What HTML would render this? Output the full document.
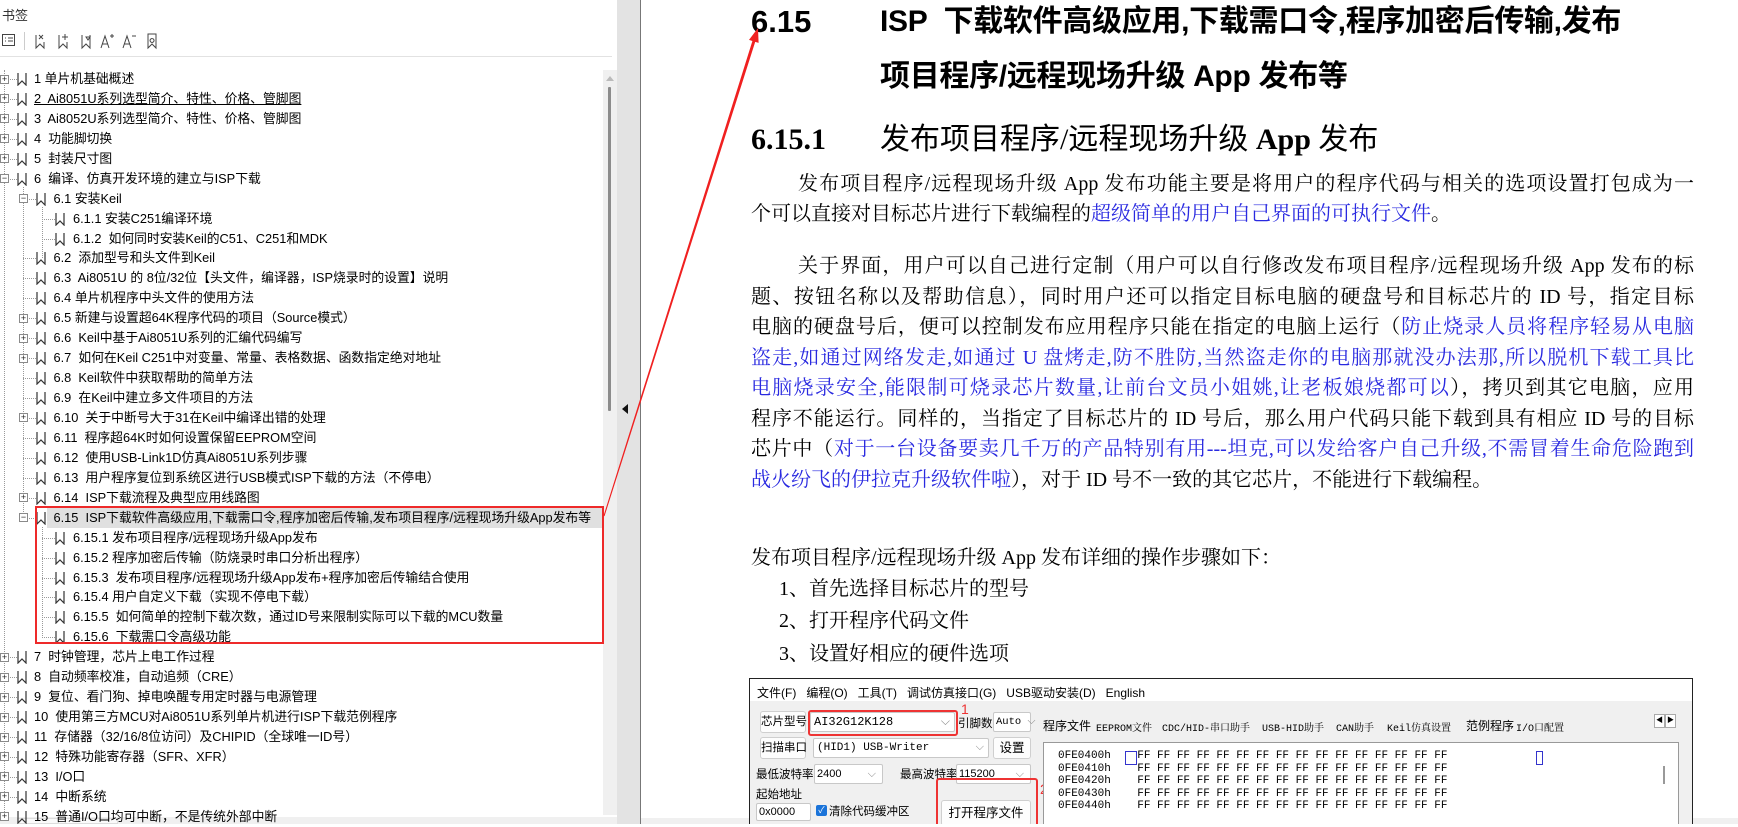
<!DOCTYPE html>
<html><head><meta charset="utf-8">
<style>
*{margin:0;padding:0;box-sizing:border-box}
body{width:1738px;height:824px;overflow:hidden;background:#fff;position:relative;font-family:"Liberation Sans","Noto Sans CJK SC",sans-serif;color:#000}
.a{position:absolute;white-space:nowrap}
.row{position:absolute;height:20px;line-height:20px;font-size:12.8px;white-space:nowrap}
.exp{position:absolute;width:9px;height:9px;border:1px solid #8a8a8a;background:#fff;font-size:9px;line-height:7px;text-align:center;color:#222}
.bm{position:absolute;width:10px;height:14px}
.hd{position:absolute;border-top:1px dotted #999;height:0}
.vd{position:absolute;border-left:1px dotted #999;width:0}
.p{position:absolute;left:751px;width:943px;font-family:"Liberation Serif","Noto Serif CJK SC",serif;font-size:20px;line-height:30px;white-space:nowrap;text-align:justify;text-align-last:justify}
.nl{text-align-last:left}
.b{color:#2a2ae0}
.ui{font-family:"Liberation Sans","Noto Sans CJK SC",sans-serif;font-size:12.5px}
.mono{font-family:"Liberation Mono","Noto Serif CJK SC",monospace;font-size:12px}
.btn{position:absolute;background:#fdfdfd;border:1px solid #cfcfcf;border-radius:3px;text-align:center}
.cb{position:absolute;background:#fff;border:1px solid #c8c8c8;border-radius:2px}
</style></head><body>

<div class="a" style="left:2px;top:5px;font-size:13px;color:#333">书签</div>
<svg class="a" style="left:0;top:30px" width="180" height="22" viewBox="0 0 180 22" fill="none" stroke="#444" stroke-width="1">
<rect x="2.5" y="4.5" width="12" height="11"/><path d="M5 8h1M8 8h5M5 11h1M8 11h5"/>
<path d="M24.5 2v18" stroke="#ccc"/>
<path d="M36 5v13l4-4 4 4v-6M39 5l4 4M43 5l-4 4"/>
<path d="M59 5v13l4-4 4 4v-6M65 4v6M62 7h6" />
<path d="M82 5v13l4-4 4 4V5M86 7l2 3 2-3z"/>
<path d="M101 18l4-12 4 12M102.5 14h5M110 6h4M112 4v4"/>
<path d="M123 18l4-12 4 12M124.5 14h5M132 6h4"/>
<path d="M148 4v14l4-4 4 4V4zM152 8.5a2 2 0 1 0 .1 0"/>
</svg>
<div class="a" style="left:0;top:56px;width:612px;height:1px;background:#e2e2e2"></div>

<div class="a" style="left:603px;top:70px;width:14px;height:745px;background:#f0f0f0"></div>
<div class="a" style="left:606px;top:76px;width:0;height:0;border-left:4px solid transparent;border-right:4px solid transparent;border-bottom:5px solid #bbb"></div>
<div class="a" style="left:608px;top:87px;width:3px;height:324px;background:#8c8c8c;border-radius:1px"></div>
<div class="a" style="left:617px;top:0;width:23px;height:824px;background:#e3e3e3"></div>
<div class="a" style="left:640px;top:0;width:1px;height:824px;background:#777"></div>
<div class="a" style="left:622px;top:404px;width:0;height:0;border-top:5px solid transparent;border-bottom:5px solid transparent;border-right:6px solid #111"></div>

<div class="vd" style="left:4px;top:70px;height:750px"></div>
<div class="vd" style="left:23px;top:187px;height:331px"></div>
<div class="vd" style="left:42px;top:207px;height:51px"></div>
<div class="vd" style="left:42px;top:527px;height:111px"></div>

<div class="a" style="left:47px;top:508px;width:556px;height:20px;background:#e0e0e0"></div>

<div id="tree"></div>

<div class="a" style="left:35px;top:506px;width:569px;height:138px;border:2px solid #ee2a2a;z-index:5"></div>

<div class="a" style="left:0;top:817px;width:617px;height:7px;background:#f0f0f0"></div>
<div class="a" style="left:17px;top:818px;width:101px;height:6px;background:#fafafa;border:1px solid #ddd"></div>
<div class="a" style="left:641px;top:818px;width:1097px;height:6px;background:#f0f0f0"></div>

<div class="a" style="left:751px;top:4px;font:bold 31px 'Liberation Sans','Noto Sans CJK SC',sans-serif;line-height:36px">6.15</div>
<div class="a" style="left:880px;top:4px;font:bold 30px 'Liberation Sans','Noto Sans CJK SC',sans-serif;line-height:36px;letter-spacing:-0.3px">ISP&nbsp; 下载软件高级应用,下载需口令,程序加密后传输,发布</div>
<div class="a" style="left:880px;top:59px;font:bold 30px 'Liberation Sans','Noto Sans CJK SC',sans-serif;line-height:36px;letter-spacing:-0.3px">项目程序/远程现场升级 App 发布等</div>
<div class="a" style="left:751px;top:122px;font:bold 30px 'Liberation Serif','Noto Serif CJK SC',serif;line-height:36px">6.15.1</div>
<div class="a" style="left:880px;top:122px;font:30px 'Liberation Serif','Noto Sans CJK SC',sans-serif;line-height:36px">发布项目程序/远程现场升级 <b>App</b> 发布</div>

<div class="p" style="top:169px;text-indent:47px">发布项目程序/远程现场升级 App 发布功能主要是将用户的程序代码与相关的选项设置打包成为一</div>
<div class="p nl" style="top:199px">个可以直接对目标芯片进行下载编程的<span class="b">超级简单的用户自己界面的可执行文件</span>。</div>
<div class="p" style="top:251px;text-indent:47px">关于界面，用户可以自己进行定制（用户可以自行修改发布项目程序/远程现场升级 App 发布的标</div>
<div class="p" style="top:281.5px">题、按钮名称以及帮助信息），同时用户还可以指定目标电脑的硬盘号和目标芯片的 ID 号，指定目标</div>
<div class="p" style="top:312px">电脑的硬盘号后，便可以控制发布应用程序只能在指定的电脑上运行（<span class="b">防止烧录人员将程序轻易从电脑</span></div>
<div class="p b" style="top:342.5px">盗走,如通过网络发走,如通过 U 盘烤走,防不胜防,当然盗走你的电脑那就没办法那,所以脱机下载工具比</div>
<div class="p" style="top:373px"><span class="b">电脑烧录安全,能限制可烧录芯片数量,让前台文员小姐姚,让老板娘烧都可以</span>），拷贝到其它电脑，应用</div>
<div class="p" style="top:403.5px">程序不能运行。同样的，当指定了目标芯片的 ID 号后，那么用户代码只能下载到具有相应 ID 号的目标</div>
<div class="p" style="top:434px">芯片中（<span class="b">对于一台设备要卖几千万的产品特别有用---坦克,可以发给客户自己升级,不需冒着生命危险跑到</span></div>
<div class="p nl" style="top:464.5px"><span class="b">战火纷飞的伊拉克升级软件啦</span>），对于 ID 号不一致的其它芯片，不能进行下载编程。</div>

<div class="p nl" style="top:543px">发布项目程序/远程现场升级 App 发布详细的操作步骤如下：</div>
<div class="p nl" style="top:574px;left:779px;width:400px">1、首先选择目标芯片的型号</div>
<div class="p nl" style="top:606px;left:779px;width:400px">2、打开程序代码文件</div>
<div class="p nl" style="top:639px;left:779px;width:400px">3、设置好相应的硬件选项</div>

<div class="a" style="left:749px;top:678px;width:944px;height:146px;border:1px solid #222;border-bottom:none;background:#f0f0f0;overflow:hidden">
  <div class="a" style="left:0;top:0;width:944px;height:22px;background:#fff"></div>
  <div class="a ui" style="left:7px;top:5px;font-size:12px">文件(F)&nbsp;&nbsp; 编程(O)&nbsp;&nbsp; 工具(T)&nbsp;&nbsp; 调试仿真接口(G)&nbsp;&nbsp; USB驱动安装(D)&nbsp;&nbsp; English</div>
  <div class="btn ui" style="left:10px;top:32px;width:46px;height:22px;line-height:20px;font-size:11.5px">芯片型号</div>
  <div class="cb mono" style="left:60px;top:33px;width:145px;height:20px;line-height:18px;padding-left:3px">AI32G12K128<span style="position:absolute;right:4px;color:#888">⌵</span></div>
  <div class="a" style="left:58px;top:31px;width:150px;height:26px;border:2px solid #e33;border-radius:3px"></div>
  <div class="a ui" style="left:211px;top:22px;color:#e33;font-size:14px">1</div>
  <div class="a ui" style="left:208px;top:36px;font-size:11.5px">引脚数</div>
  <div class="cb mono" style="left:243px;top:33px;width:38px;height:20px;line-height:18px;padding-left:2px;font-size:10.5px">Auto<span style="color:#888"> ⌵</span></div>
  <div class="btn ui" style="left:10px;top:58px;width:46px;height:22px;line-height:20px;font-size:11.5px">扫描串口</div>
  <div class="cb mono" style="left:63px;top:59px;width:176px;height:20px;line-height:18px;padding-left:3px;font-size:11px">(HID1) USB-Writer<span style="position:absolute;right:4px;color:#888">⌵</span></div>
  <div class="btn ui" style="left:243px;top:58px;width:38px;height:22px;line-height:20px">设置</div>
  <div class="a ui" style="left:6px;top:87px;font-size:11.5px">最低波特率</div>
  <div class="cb ui" style="left:64px;top:85px;width:69px;height:20px;line-height:18px;padding-left:2px;font-size:11px">2400<span style="position:absolute;right:6px;color:#888">⌵</span></div>
  <div class="a ui" style="left:150px;top:87px;font-size:11.5px">最高波特率</div>
  <div class="cb ui" style="left:206px;top:85px;width:75px;height:20px;line-height:18px;padding-left:2px;font-size:11px">115200<span style="position:absolute;right:6px;color:#888">⌵</span></div>
  <div class="a ui" style="left:6px;top:107px;font-size:11.5px">起始地址</div>
  <div class="cb ui" style="left:6px;top:124px;width:55px;height:18px;line-height:16px;font-size:11px;padding-left:2px">0x0000</div>
  <div class="a" style="left:66px;top:126px;width:11px;height:11px;background:#1a73d9;border-radius:2px;color:#fff;font-size:9px;line-height:11px;text-align:center">✓</div>
  <div class="a ui" style="left:79px;top:124px;font-size:11.5px">清除代码缓冲区</div>
  <div class="btn ui" style="left:191px;top:121px;width:90px;height:26px;line-height:24px">打开程序文件</div>
  <div class="a" style="left:186px;top:99px;width:102px;height:50px;border:2px solid #e33;border-radius:3px"></div>
  <div class="a ui" style="left:290px;top:102px;color:#e33;font-size:14px">2</div>
  <span class="a ui" style="left:293px;top:38px;font-size:12px">程序文件</span>
  <span class="a mono" style="left:346px;top:40px;font-size:10px">EEPROM文件</span>
  <span class="a mono" style="left:412px;top:40px;font-size:10px">CDC/HID-串口助手</span>
  <span class="a mono" style="left:512px;top:40px;font-size:10px">USB-HID助手</span>
  <span class="a mono" style="left:586px;top:40px;font-size:10px">CAN助手</span>
  <span class="a mono" style="left:637px;top:40px;font-size:10px">Keil仿真设置</span>
  <span class="a ui" style="left:716px;top:38px;font-size:12px">范例程序</span>
  <span class="a mono" style="left:766px;top:40px;font-size:10px">I/O口配置</span>
  <div class="a" style="left:904px;top:35px;width:11px;height:14px;border:1px solid #aaa;background:#fff;font-size:7px;line-height:12px;text-align:center">◀</div>
  <div class="a" style="left:915px;top:35px;width:11px;height:14px;border:1px solid #aaa;background:#fff;font-size:7px;line-height:12px;text-align:center">▶</div>
  <div class="a" style="left:293px;top:63px;width:636px;height:90px;background:#fff;border:1px solid #999"></div>
  <div class="a" style="left:913px;top:87px;width:2px;height:18px;background:#999"></div>
  <div class="a" style="left:375px;top:72px;width:12px;height:14px;border:1px solid #33c"></div>
  <div class="a" style="left:786px;top:72px;width:7px;height:14px;border:1px solid #33c"></div>
  <div class="a mono" style="left:308px;top:71px;font-size:11px;line-height:12.5px;white-space:pre">0FE0400h    FF FF FF FF FF FF FF FF FF FF FF FF FF FF FF FF
0FE0410h    FF FF FF FF FF FF FF FF FF FF FF FF FF FF FF FF
0FE0420h    FF FF FF FF FF FF FF FF FF FF FF FF FF FF FF FF
0FE0430h    FF FF FF FF FF FF FF FF FF FF FF FF FF FF FF FF
0FE0440h    FF FF FF FF FF FF FF FF FF FF FF FF FF FF FF FF</div>
</div>

<svg class="a" style="left:0;top:0;z-index:6" width="1738" height="824">
<polygon fill="#f02020" points="604.5,516.2 603.5,515.8 752.4,41 749,39.9 758,28 758.6,42.9 755.2,41.9"/>
</svg>

<script>
var items=[
[0,'+','1 单片机基础概述'],
[0,'+','2&nbsp; Ai8051U系列选型简介、特性、价格、管脚图',1],
[0,'+','3&nbsp; Ai8052U系列选型简介、特性、价格、管脚图'],
[0,'+','4&nbsp; 功能脚切换'],
[0,'+','5&nbsp; 封装尺寸图'],
[0,'-','6&nbsp; 编译、仿真开发环境的建立与ISP下载'],
[1,'-','6.1 安装Keil'],
[2,'','6.1.1 安装C251编译环境'],
[2,'','6.1.2&nbsp; 如何同时安装Keil的C51、C251和MDK'],
[1,'','6.2&nbsp; 添加型号和头文件到Keil'],
[1,'','6.3&nbsp; Ai8051U 的 8位/32位【头文件，编译器，ISP烧录时的设置】说明'],
[1,'','6.4 单片机程序中头文件的使用方法'],
[1,'+','6.5 新建与设置超64K程序代码的项目（Source模式）'],
[1,'+','6.6&nbsp; Keil中基于Ai8051U系列的汇编代码编写'],
[1,'+','6.7&nbsp; 如何在Keil C251中对变量、常量、表格数据、函数指定绝对地址'],
[1,'','6.8&nbsp; Keil软件中获取帮助的简单方法'],
[1,'','6.9&nbsp; 在Keil中建立多文件项目的方法'],
[1,'+','6.10&nbsp; 关于中断号大于31在Keil中编译出错的处理'],
[1,'','6.11&nbsp; 程序超64K时如何设置保留EEPROM空间'],
[1,'','6.12&nbsp; 使用USB-Link1D仿真Ai8051U系列步骤'],
[1,'','6.13&nbsp; 用户程序复位到系统区进行USB模式ISP下载的方法（不停电）'],
[1,'+','6.14&nbsp; ISP下载流程及典型应用线路图'],
[1,'-','6.15&nbsp; ISP下载软件高级应用,下载需口令,程序加密后传输,发布项目程序/远程现场升级App发布等'],
[2,'','6.15.1 发布项目程序/远程现场升级App发布'],
[2,'','6.15.2 程序加密后传输（防烧录时串口分析出程序）'],
[2,'','6.15.3&nbsp; 发布项目程序/远程现场升级App发布+程序加密后传输结合使用'],
[2,'','6.15.4 用户自定义下载（实现不停电下载）'],
[2,'','6.15.5&nbsp; 如何简单的控制下载次数，通过ID号来限制实际可以下载的MCU数量'],
[2,'','6.15.6&nbsp; 下载需口令高级功能'],
[0,'+','7&nbsp; 时钟管理，芯片上电工作过程'],
[0,'+','8&nbsp; 自动频率校准，自动追频（CRE）'],
[0,'+','9&nbsp; 复位、看门狗、掉电唤醒专用定时器与电源管理'],
[0,'+','10&nbsp; 使用第三方MCU对Ai8051U系列单片机进行ISP下载范例程序'],
[0,'+','11&nbsp; 存储器（32/16/8位访问）及CHIPID（全球唯一ID号）'],
[0,'+','12&nbsp; 特殊功能寄存器（SFR、XFR）'],
[0,'+','13&nbsp; I/O口'],
[0,'+','14&nbsp; 中断系统'],
[0,'+','15&nbsp; 普通I/O口均可中断，不是传统外部中断']
];
(function(){
var h='';
for(var i=0;i<items.length;i++){
 var it=items[i],L=it[0],cy=79+i*19.94,ty=cy-10;
 var ex=4+19*L, bm=17+19*L, tx=34+19.5*L;
 h+='<div class="hd" style="left:'+ex+'px;top:'+cy+'px;width:'+(bm-ex)+'px"></div>';
 if(it[1]) h+='<div class="exp" style="z-index:2;left:'+(ex-4)+'px;top:'+(cy-4.5)+'px">'+(it[1]=='+'?'+':'−')+'</div>';
 h+='<svg class="bm" style="z-index:2;left:'+bm+'px;top:'+(cy-7)+'px" viewBox="0 0 10 14"><path d="M1 1V13L5 9L9 13V1" fill="none" stroke="#333" stroke-width="1.2"/></svg>';
 h+='<div class="row" style="z-index:2;left:'+tx+'px;top:'+ty+'px;'+(it[3]?'text-decoration:underline':'')+'">'+it[2]+'</div>';
}
document.getElementById('tree').innerHTML=h;
})();
</script>
</body></html>
